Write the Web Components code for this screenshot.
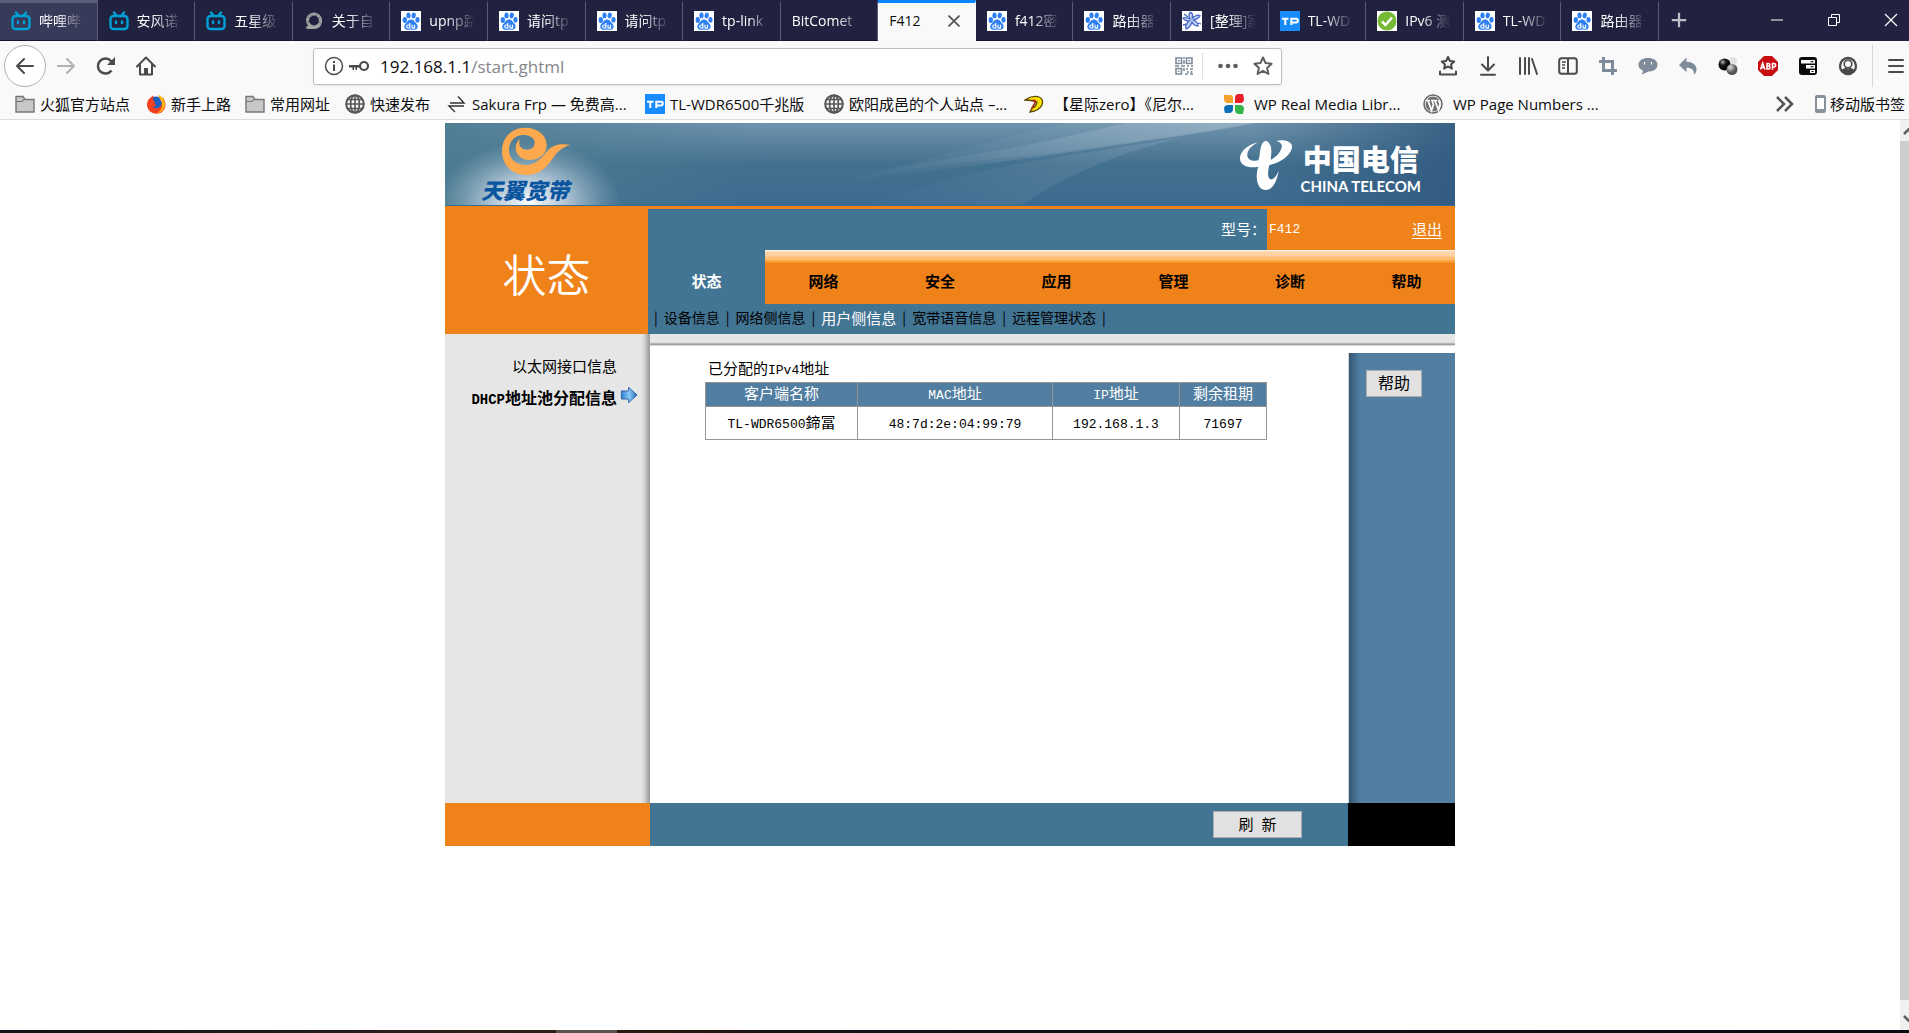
<!DOCTYPE html>
<html lang="zh-CN">
<head>
<meta charset="utf-8">
<title>F412</title>
<style>
html,body{margin:0;height:100%}
body{font-family:"Open Sans","Noto Sans CJK SC",sans-serif;font-size:15px;color:#000;background:#fff;overflow:hidden}
</style>
</head>
<body>
<browser-window></browser-window>
<script>
const component = (name, css, html) => customElements.define(name, class extends HTMLElement {
  constructor() {
    super();
    this.attachShadow({mode: 'open'}).innerHTML =
      `<style>*{box-sizing:border-box}button{font-family:inherit;cursor:pointer}a{color:inherit;text-decoration:none}${css}</style>${typeof html === 'function' ? html(this) : html}`;
  }
});

/* ---------- icons, drawn on a 20 x 20 grid ---------- */
const line = 'fill="none" stroke="currentColor" stroke-width="2" stroke-linecap="round" stroke-linejoin="round"';
const globe = `<g fill="none" stroke="#555" stroke-width="1.6"><circle cx="10" cy="10" r="8.8" stroke-width="2"/><ellipse cx="10" cy="10" rx="4.4" ry="8.8"/><path d="M10 1v18M1 10h18M2.8 5.5h14.4M2.8 14.500h14.400"/></g>`;
const icons = {
  bili: `<g fill="none" stroke="#00a1d6" stroke-width="2.400" stroke-linecap="round"><rect x="1.500" y="5" width="17" height="13" rx="3"/><path d="M5 1.500l2.500 3M15 1.500l-2.500 3M7 10.500v1.500M13 10.500v1.500"/></g>`,
  ring: `<path d="M10 1.500a8 8 0 0 1 8 8.500c0 5-3.500 8-8 8H3.500l-2-1.500L4 14.500A8 8 0 0 1 2 10a8 8 0 0 1 8-8.500z" fill="#a3a3a3"/><circle cx="10" cy="9.500" r="5" fill="#20223f"/><path d="M4 6l2 1M6 3.500l1.500 2M3 11l2-.5M13 3l-1 2M16 6.500l-2 1M16.500 12l-2-1" stroke="#66677a"/>`,
  baidu: `<path d="M0 0h20v20H0z" fill="#fff"/><g fill="#2f80f5"><ellipse cx="3.800" cy="9" rx="2.200" ry="2.900"/><ellipse cx="7.500" cy="4.400" rx="2.100" ry="2.900"/><ellipse cx="12.700" cy="4.500" rx="2.100" ry="2.900" transform="rotate(12 12.700 4.500)"/><ellipse cx="16.500" cy="8.800" rx="2.100" ry="2.800"/><path d="M10 8.500c2.800 0 3.500 2.300 5.300 4 2.300 2.300 1.500 6-1.500 6.300-1.400.1-2.400-.3-3.800-.3s-2.400.4-3.800.3C3 18.500 2.400 14.800 4.700 12.500c1.800-1.700 2.500-4 5.300-4z"/></g><path d="M8.800 12v5H7.200a1.500 1.500 0 0 1 0-3h1.600M11 13.800v2.400q0 .9 1 .9h1.500v-3.300" fill="none" stroke="#fff" stroke-width="1.200"/>`,
  sketch: `<path d="M0 0h20v20H0z" fill="#fff"/><path d="M8 1.500c3 0 3 3 2 6 3-3 6-4 8-3-1 3-4 4-7 4.500 3 1 5 3 5 6-3 0-5-2-6-4-1 3-3 6-6 7-1-3 1-6 3-8-3 0-5-1-6-3 2-1 5 0 7 1-1-2-1-5 0-6.500zM2 3l4 3M16 12l3 1M5 13l-4 1" fill="#c5d2f3" stroke="#4467c9" stroke-width="1.300"/>`,
  tp: `<path d="M0 0h20v20H0z" fill="#188cff"/><path d="M2 7.800h6.500M5.300 7.800V14M11.300 14V7.800h5q1.500 0 1.500 1.800t-1.500 1.800h-5" fill="none" stroke="#fff" stroke-width="2"/>`,
  check: `<path d="M0 0h20v20H0z" fill="#fff"/><circle cx="10" cy="10" r="9.500" fill="#76b935"/><path d="M5 10.500l3.500 3.500L15 6.500" fill="none" stroke="#fff" stroke-width="2.500"/>`,
  close: `<path d="M4.500 4.500l11 11m0-11l-11 11" ${line}/>`,
  plus: `<path d="M10 2v16M2 10h16" fill="none" stroke="currentColor" stroke-width="2.500"/>`,
  minimize: `<path d="M4 10h12" stroke="currentColor" stroke-width="1"/>`,
  restore: `<path d="M4.500 7.500h8v8h-8zM7.500 7V4.500h8v8H13" fill="none" stroke="currentColor"/>`,
  exit: `<path d="M4 4l12 12M16 4L4 16" stroke="currentColor" stroke-width="1.200"/>`,
  back: `<path d="M18 10H2M9 3l-7 7 7 7" ${line}/>`,
  forward: `<path d="M2 10h16M11 3l7 7-7 7" ${line}/>`,
  reload: `<path d="M15.500 14.500A7.500 7.500 0 1 1 15 5l1.500 2" fill="none" stroke="currentColor" stroke-width="2.500"/><path d="M19 1v8h-8z" fill="currentColor"/>`,
  home: `<path d="M1 10.500L10 1.500l9 9M4 9v9.500h12V9" ${line}/><path d="M8 12h4v6H8z" fill="currentColor"/>`,
  info: `<circle cx="10" cy="10" r="8.500" fill="none" stroke="currentColor" stroke-width="1.500"/><path d="M9 8.500h2V15H9zM9 5h2v2H9z" fill="currentColor"/>`,
  key: `<circle cx="15" cy="10" r="4" fill="none" stroke="currentColor" stroke-width="2.200"/><path d="M0 9h11v2.500H8V14H6.500v-2.500H5V14H3.500v-2.500H0z" fill="currentColor"/>`,
  qr: `<g fill="none" stroke="#7d8b9a" stroke-width="1.600"><path d="M2 2h5.500v5.500H2zM12.500 2H18v5.500h-5.500zM2 12.500h5.500V18H2z"/><path d="M4 4.700h1.500M14.500 4.700H16M4 15.200h1.500M9 2h2M10 4v4M1 10h4M7 10h4M13 10h2M17 10h2M10 12v3M12 13h2M16 13h3M13 16h2M11 18h3M16 18h3M17.500 15v2"/></g>`,
  dots: `<g fill="currentColor"><circle cx="2.500" cy="10" r="2.300"/><circle cx="10" cy="10" r="2.300"/><circle cx="17.500" cy="10" r="2.300"/></g>`,
  star: `<path d="M10 1.500l2.600 5.600 6 .7-4.500 4.100 1.300 6.100-5.400-3.100L4.600 18l1.300-6.100-4.500-4.100 6-.7z" ${line}/>`,
  tray: `<path d="M10 1l1.900 4 4.300.5-3.200 2.900.9 4.200-3.900-2.200-3.900 2.200.9-4.200-3.200-2.900 4.300-.5z" ${line}/><path d="M2 15.500V18.500h16v-3" ${line}/>`,
  download: `<path d="M10 1v13M4 8.500l6 6 6-6M3 18.800h14" ${line}/>`,
  library: `<path d="M2 2v16M7 2v16M11 2v16M14 3l5 15" ${line}/>`,
  sidebar: `<rect x="1.200" y="2.200" width="17.600" height="15.600" rx="2.500" ${line}/><path d="M10 2v16" stroke="currentColor" stroke-width="2"/><path d="M4 6h4M4 9h3M4 12h3" stroke="currentColor" stroke-width="1.500"/>`,
  crop: `<path d="M5.500 1v13.500H19M1 5.500h13.500V19" fill="none" stroke="#7d8b9a" stroke-width="3"/>`,
  chat: `<path d="M10 2c5.500 0 9.500 2.500 9.500 6.700s-4 6.800-9 6.800l-6.500 3 1-4C2 13.500.5 11.500.5 8.700.5 4.500 4.500 2 10 2z" fill="#7d8b9a"/><path d="M6.500 6v2.500M13.500 6v2.500" stroke="#fff" stroke-width="1.200"/>`,
  undo: `<path d="M8.500 1.500v4.300c6 0 10 3.200 10 7.700 0 2.300-1 3.900-2.700 5.300.8-4.500-2-7-7.300-7v4.500L1 9z" fill="#7d8b9a"/>`,
  balls: `<defs><radialGradient id="k" cx=".35" cy=".3"><stop stop-color="#bbb"/><stop offset=".5" stop-color="#222"/><stop offset="1"/></radialGradient><radialGradient id="g" cx=".35" cy=".3"><stop stop-color="#ddd"/><stop offset="1" stop-color="#555"/></radialGradient></defs><circle cx="15" cy="5" r="4" fill="#e2e2e2"/><circle cx="6.500" cy="8.500" r="6" fill="url(#k)"/><circle cx="14" cy="13.500" r="5.500" fill="url(#g)"/>`,
  abp: `<path d="M6 0h8l6 6v8l-6 6H6l-6-6V6z" fill="#c70d12"/><g fill="none" stroke="#fff" stroke-width="1.500"><path d="M2.500 13.500L4.700 7l2.200 6.500M3.200 11.500h3M9 7.500V13h1.500q1.500 0 1.500-1.500T10.500 10H9h1.300q1.500 0 1.500-1.300T10.300 7.500zM14.500 13.800V7.500h1.300q1.800 0 1.800 1.700t-1.800 1.700h-1.300"/></g>`,
  notes: `<path d="M4 1h12q3 0 3 3v12q0 3-3 3H4q-3 0-3-3V4q0-3 3-3z" fill="#0c0c0c"/><path d="M3 4h14v3.500H3zM8 9h9v3.500H8zM12 14h5v3h-5z" fill="#fff"/><path d="M12.500 5.700h3M12.500 10.700h3M13.500 15.500h2" stroke="#000"/>`,
  account: `<circle cx="10" cy="10" r="8" fill="none" stroke="currentColor" stroke-width="2.300"/><circle cx="10" cy="8" r="3.800" fill="none" stroke="currentColor" stroke-width="1.600"/><path d="M3.500 14q2.500-2 4-2.200 2.500 1.500 5 0 1.500.2 4 2.200-2.500 4-6.500 4t-6.500-4z" fill="currentColor"/>`,
  menu: `<path d="M3 4h14M3 10h14M3 16h14" ${line}/>`,
  folder: `<path d="M1 2.500h7l2 3h9V18H1z" fill="#c8c8ca" stroke="#77777a" stroke-width="1.400"/><path d="M1 7.500h6l2-2" fill="none" stroke="#77777a" stroke-width="1.200"/>`,
  firefox: `<circle cx="10" cy="10.500" r="8" fill="#1b5fc4"/><path d="M8 1.500C2 4 .5 8 1.200 12.500 2.200 17 6 19.700 10.500 19.700c5.500 0 9-4 9-9.200 0-3-1.500-5.500-3-7.500.5 3-.5 7-2 9-2 3-6.500 3-8 .5 2 .5 3-.5 4-1.500-2-.5-2.500-2.500-1.500-4C7 7 6 6 8 1.500z" fill="#f6401d"/><path d="M12.500.5c4.500 3 7 6.500 6.500 11-.5 4-3.500 7-8 7.500 4-2 5.500-5 5-9-.3-3-3-5-3.500-9.500z" fill="#ffb515"/>`,
  globe,
  natapp: `<path d="M3 9h14L11 2.500M17 12H2l6 6" fill="none" stroke="#333" stroke-width="1.400"/>`,
  swoop: `<path d="M1 6q7-5 14-3 5 2 3 8-3 6-12 7l2-4q4-1 5-6-6-2-12-2z" fill="#ffe400" stroke="#5a4500" stroke-width="1.300"/><path d="M8 6.500q4-1 3.500 1.500l-4 7" fill="none" stroke="#b22c10" stroke-width="1.600"/>`,
  clover: `<path d="M0 1h6q3 0 3 3v5H4Q0 9 0 5z" fill="#f6a22c"/><path d="M19 0h-4q-4 0-4 4v5h5q4 0 4-4z" fill="#e91d25"/><path d="M1 19h4q4 0 4-4v-4H4q-4 0-4 4z" fill="#0d6fb8"/><path d="M19 20h-4q-4 0-4-4v-5h5q4 0 4 4z" fill="#35b44a"/>`,
  wordpress: `<circle cx="10" cy="10" r="9" fill="#fff" stroke="#666" stroke-width="1.500"/><circle cx="10" cy="10" r="7.500" fill="#707070"/><path d="M2.500 6.500H7M5 6.500l3.500 10 2-6L9 6.500h5M12 6.500l3.500 9.500 1.500-6-1.500-4" fill="none" stroke="#fff" stroke-width="1.700"/>`,
  more: `<path d="M3 3l7 7-7 7M11 3l7 7-7 7" fill="none" stroke="#555" stroke-width="2.500"/>`,
  phone: `<rect x="5" y="1" width="11" height="18" rx="2" fill="#87919c"/><path d="M7 4h7v11H7z" fill="#fff"/>`,
  arrow: `<defs><linearGradient id="a" x2="1"><stop stop-color="#2f7fd0"/><stop offset=".5" stop-color="#8cc8f5"/><stop offset="1" stop-color="#2468b8"/></linearGradient></defs><path d="M1.500 5.500h8V1.500l9.500 8.500-9.500 8.500v-4h-8z" fill="url(#a)" stroke="#2a5da8"/>`
};
component('ui-icon', `:host{display:block;width:20px;height:20px;flex:none}svg{display:block;width:100%;height:100%}`,
  el => `<svg viewBox="0 0 20 20" aria-hidden="true">${icons[el.getAttribute('name')]}</svg>`);

/* ---------- browser chrome ---------- */
component('browser-tab', `
:host{display:flex;align-items:center;gap:8px;min-width:0;padding:0 12px 1px 11px;border-right:1px solid #5b5c78;border-top:3px solid transparent;border-bottom:1px solid #14162f;color:#fff;font-size:14px;overflow:hidden}
.label{flex:1;min-width:0;overflow:hidden;white-space:nowrap;line-height:20px;padding-bottom:1px;-webkit-mask-image:linear-gradient(90deg,#000 35%,transparent);mask-image:linear-gradient(90deg,#000 35%,transparent)}
:host([wide]) .label{-webkit-mask-image:linear-gradient(90deg,#000 60%,transparent);mask-image:linear-gradient(90deg,#000 60%,transparent)}
:host([hover]){background:#383a59;border-top-color:#5c5d78}
:host([active]){background:#f9f9fa;color:#0c0c0d;border-top-color:#0a84ff;border-right-color:#f9f9fa;border-bottom-color:#f9f9fa}
:host([active]) .label{-webkit-mask-image:none;mask-image:none}
button{display:flex;padding:0;border:0;background:none;color:#555}
ui-icon[name=close]{width:18px;height:18px}`,
  el => `${el.hasAttribute('icon') ? `<ui-icon name="${el.getAttribute('icon')}"></ui-icon>` : ''}<span class="label"><slot></slot></span>${el.hasAttribute('active') ? '<button aria-label="关闭标签页"><ui-icon name="close"></ui-icon></button>' : ''}`);

component('tab-strip', `
:host{display:flex;height:41px;background:#20223f;color:#fff}
.tabs{flex:1;min-width:0;display:grid;grid-template-columns:repeat(17,minmax(0,1fr))}
.controls{width:250px;display:flex;justify-content:space-between;align-items:center;padding:0 8px 1px 11px}
.window{display:flex;gap:37px}
button{display:flex;padding:0;border:0;background:none;color:#fff}
.new{color:#bdbdc8}.new ui-icon{width:18px;height:18px}`, `
<div class="tabs">
<browser-tab hover icon="bili">哔哩哔</browser-tab><browser-tab icon="bili">安风诺</browser-tab><browser-tab icon="bili">五星级</browser-tab><browser-tab icon="ring">关于自</browser-tab><browser-tab icon="baidu">upnp路</browser-tab><browser-tab icon="baidu">请问tp</browser-tab><browser-tab icon="baidu">请问tp</browser-tab><browser-tab icon="baidu" wide>tp-link</browser-tab><browser-tab wide>BitComet</browser-tab><browser-tab active>F412</browser-tab><browser-tab icon="baidu">f412密</browser-tab><browser-tab icon="baidu">路由器</browser-tab><browser-tab icon="sketch">[整理]家</browser-tab><browser-tab icon="tp">TL-WD</browser-tab><browser-tab icon="check">IPv6 测</browser-tab><browser-tab icon="baidu">TL-WD</browser-tab><browser-tab icon="baidu">路由器</browser-tab>
</div>
<div class="controls"><button class="new" aria-label="新建标签页"><ui-icon name="plus"></ui-icon></button>
<div class="window"><button aria-label="最小化"><ui-icon name="minimize"></ui-icon></button><button aria-label="还原"><ui-icon name="restore"></ui-icon></button><button aria-label="关闭"><ui-icon name="exit"></ui-icon></button></div></div>`);

component('nav-toolbar', `
:host{display:flex;align-items:center;height:50px;padding:0 3px 0 4px;color:#4a4a4c}
button{display:flex;padding:0;border:0;background:none;color:inherit}
.history{display:flex;align-items:center;width:309px;gap:20px}
.back{width:42px;height:42px;border:1px solid #b1b1b3;border-radius:50%;background:#fff;align-items:center;justify-content:center}
.off{color:#b1b1b3;margin-left:-10px}
.address{flex:1;display:flex;align-items:center;height:37px;padding:0 8px 0 10px;background:#fff;border:1px solid #bebec0;border-radius:3px;box-shadow:0 1px 3px #0001}
.address>ui-icon{margin-right:5px}
.field{flex:1;display:grid;align-items:center;font-size:17px;color:#0c0c0d;padding-left:6px}
.field>*{grid-area:1/1}
.path{color:#85858a}
.field input{width:100%;padding:0;border:0;outline:0;background:none;font:inherit;color:transparent}
.actions{display:flex;align-items:center;gap:15px;color:#5d5d60}
.actions i{width:1px;height:26px;margin-left:-7px;background:#e0e0e2}
.tools{display:flex;gap:20px;padding:0 14px 0 156px}
.menu{height:42px;border-left:1px solid #d7d7db;padding-left:13px;align-items:center}`, `
<div class="history"><button class="back" aria-label="后退"><ui-icon name="back"></ui-icon></button><button class="off" aria-label="前进"><ui-icon name="forward"></ui-icon></button><button aria-label="刷新"><ui-icon name="reload"></ui-icon></button><button aria-label="主页"><ui-icon name="home"></ui-icon></button></div>
<div class="address"><ui-icon name="info"></ui-icon><ui-icon name="key"></ui-icon>
<div class="field"><span>192.168.1.1<span class="path">/start.ghtml</span></span><input type="text" aria-label="地址"></div>
<div class="actions"><ui-icon name="qr"></ui-icon><i></i><ui-icon name="dots"></ui-icon><ui-icon name="star"></ui-icon></div></div>
<div class="tools">${['tray','download','library','sidebar','crop','chat','undo','balls','abp','notes','account'].map(n => `<button aria-label="${n}"><ui-icon name="${n}"></ui-icon></button>`).join('')}</div>
<button class="menu" aria-label="菜单"><ui-icon name="menu"></ui-icon></button>`);

component('bookmark-item', `:host{display:flex;min-width:0}a{display:flex;align-items:center;gap:5px;white-space:nowrap;line-height:20px;color:#0c0c0d}:host([spaced]) a{gap:10px}:host([tight]) a{gap:0}`,
  el => `<a href="#"><ui-icon name="${el.getAttribute('icon')}"></ui-icon><span><slot></slot></span></a>`);

component('bookmark-bar', `
:host{display:flex;align-items:center;height:28px;padding:0 4px 3px 15px}
nav{flex:1;display:grid;grid-template-columns:131px 99px 100px 102px 198px 179px 200px 200px 199px 1fr}
.end{display:flex;align-items:center;gap:16px}
button{display:flex;padding:0;border:0;background:none}`, `
<nav aria-label="书签"><bookmark-item icon="folder">火狐官方站点</bookmark-item><bookmark-item icon="firefox">新手上路</bookmark-item><bookmark-item icon="folder">常用网址</bookmark-item><bookmark-item icon="globe">快速发布</bookmark-item><bookmark-item icon="natapp">Sakura Frp — 免费高...</bookmark-item><bookmark-item icon="tp">TL-WDR6500千兆版</bookmark-item><bookmark-item icon="globe">欧阳成邑的个人站点 –...</bookmark-item><bookmark-item icon="swoop" spaced>【星际zero】《尼尔...</bookmark-item><bookmark-item icon="clover" spaced>WP Real Media Libr...</bookmark-item><bookmark-item icon="wordpress" spaced>WP Page Numbers ...</bookmark-item></nav>
<div class="end"><button aria-label="更多书签"><ui-icon name="more"></ui-icon></button><bookmark-item icon="phone" tight>移动版书签</bookmark-item></div>`);

component('scroll-track', `
:host{display:flex;flex-direction:column;width:9px;background:#f0f0f0;overflow:hidden}
div{flex:1;background:#cdcdcd}
svg{display:block;width:17px;flex:none}`, `
<svg height="21" viewBox="0 0 17 21"><path d="M4 14l4.500-4.500L13 14" fill="none" stroke="#606060" stroke-width="2.500"/></svg><div></div>
<svg height="30" viewBox="0 0 17 30"><path d="M4 16l4.500 4.500L13 16" fill="none" stroke="#606060" stroke-width="2.500"/></svg>`);

/* ---------- router page ---------- */
component('brand-banner', `
:host{display:grid;height:83px;overflow:hidden;border-bottom:1px solid #3a6b90}
:host>*,svg,.words{grid-area:1/1}
svg{display:block;width:100%;height:83px}
.words{display:flex;justify-content:space-between;align-items:flex-start;padding:18px 34px 0 36px}
.left{font-size:22px;line-height:28px;font-weight:900;font-style:italic;color:#0a55a0;padding-top:35px}
.right{text-align:center;color:#fff}
.right b{display:block;font-size:29px;line-height:38px;font-weight:900}
.right small{display:block;font:bold 15px/15px Lato,sans-serif}`, `
<svg viewBox="0 0 1010 83" preserveAspectRatio="none" aria-hidden="true"><defs>
<linearGradient id="base" x2="0" y2="1"><stop stop-color="#6f93ad"/><stop offset=".5" stop-color="#42708f"/><stop offset="1" stop-color="#3d6b90"/></linearGradient>
<linearGradient id="side"><stop stop-color="#4d7d92" stop-opacity=".9"/><stop offset=".3" stop-color="#4d7d92" stop-opacity="0"/><stop offset=".8" stop-color="#30597f" stop-opacity="0"/><stop offset="1" stop-color="#30597f" stop-opacity=".85"/></linearGradient>
<radialGradient id="glow"><stop stop-color="#fff"/><stop offset=".4" stop-color="#d5e0ec" stop-opacity=".75"/><stop offset="1" stop-color="#a0bdd0" stop-opacity="0"/></radialGradient>
<linearGradient id="ray"><stop stop-color="#b8cbd9" stop-opacity="0"/><stop offset="1" stop-color="#b8cbd9" stop-opacity=".5"/></linearGradient></defs>
<path d="M0 0h1010v83H0z" fill="url(#base)"/><path d="M0 0h1010v83H0z" fill="url(#side)"/>
<path d="M315 83Q430 45 590 32Q700 18 810 0H620Q460 40 315 83z" fill="url(#ray)" opacity=".35"/><path d="M420 56Q600 34 700 18Q760 10 810 0H680Q560 30 420 48z" fill="url(#ray)" opacity=".8"/>
<path d="M420 83Q500 52 590 38Q660 26 735 15Q640 38 575 83z" fill="url(#ray)" opacity=".35"/>
<ellipse cx="84" cy="80" rx="92" ry="62" fill="url(#glow)"/>
<path transform="translate(-5 -8) scale(.33333)" fill="#ffa94e" d="M240 72C232 95 248 105 262 104C276 103 285 94 284 82C283 68 268 60 250 60C222 60 206 82 207 108C208 134 230 150 256 150C292 150 305 125 325 105C345 84 370 86 392 90C360 98 352 112 335 135C315 162 295 180 258 180C215 180 186 148 186 108C186 68 215 38 255 38C295 38 320 62 320 90C320 118 298 135 268 135C243 135 227 118 227 100C227 88 232 78 240 72Z"/>
<path transform="translate(505 -8) scale(.33333)" fill="#fff" d="M925 82C895 88 868 110 870 132C872 155 900 160 925 155C918 175 918 200 928 215C936 226 952 228 962 220C975 210 982 190 986 168C978 185 970 195 962 193C952 190 953 170 958 150C985 145 1020 125 1026 98C1028 80 1005 72 978 78C990 80 998 88 995 98C990 115 975 128 962 134C964 115 968 95 955 82C948 74 938 80 934 92C928 110 930 125 925 136C905 140 890 132 892 118C894 102 908 90 925 82Z"/></svg>
<div class="words"><div class="left">天翼宽带</div><div class="right"><b>中国电信</b><small>CHINA TELECOM</small></div></div>`);

component('device-bar', `
:host{display:flex;height:44px;color:#fff;line-height:41px}
.model{flex:1;background:#427493;border-top:3px solid #ef8219;text-align:right;padding-right:1px}
.value{width:188px;background:#ef8219;display:flex;justify-content:space-between;padding:3px 13px 0 2px}
.value span{font:13px/41px "Liberation Mono",monospace}
a{text-decoration:underline;text-underline-offset:3px}`, `
<div class="model">型号：</div><div class="value"><span>F412</span><a href="#">退出</a></div>`);

component('main-menu', `
:host{display:grid;grid-template-columns:repeat(2,117px 117px 116px) 1fr;overflow:hidden;height:54px}
a{display:flex;align-items:center;justify-content:center;padding-top:6px;font-weight:bold;color:#000;background:linear-gradient(#fdeee0 0 1px,#fdd0a5 2px 6px,#ffbd72 7px 10px,#fba842 10px 12px,#f4902a 12px 13px,#ef8219 13px)}
a:last-child{padding-left:10px}
a[aria-current]{background:#427493;color:#fff}`, `
<a href="#" aria-current="page">状态</a><a href="#">网络</a><a href="#">安全</a><a href="#">应用</a><a href="#">管理</a><a href="#">诊断</a><a href="#">帮助</a>`);

component('sub-menu', `
:host{display:flex;align-items:center;gap:6px;height:30px;padding:0 6px 4px;background:#427493;font-family:"Noto Sans CJK SC",sans-serif;font-size:14px;white-space:nowrap}
a[aria-current]{color:#fff;font-size:15px}`, `
<span>|</span><a href="#">设备信息</a><span>|</span><a href="#">网络侧信息</a><span>|</span><a href="#" aria-current="page">用户侧信息</a><span>|</span><a href="#">宽带语音信息</a><span>|</span><a href="#">远程管理状态</a><span>|</span>`);

component('page-header', `
:host{display:grid;grid-template-columns:203px minmax(0,1fr)}
h1{margin:0;display:flex;align-items:center;justify-content:center;padding-top:10px;background:#ef8219;color:#fff;font-size:44px;font-weight:350;line-height:48px}`, `
<h1>状态</h1><div><device-bar></device-bar><main-menu></main-menu><sub-menu></sub-menu></div>`);

component('side-menu', `
:host{display:block;width:205px;background:linear-gradient(270deg,#9b9b9b,#a8a8a8 2px,#cfcfcf 5px,#e6e6e6 9px)}
ul{list-style:none;margin:0;padding:16px 12px 0 0}
li{display:grid;grid-template-columns:1fr 18px;column-gap:3px;align-items:center;height:31px;text-align:right;white-space:nowrap}
li b{font-size:16px}
.en{font:bold 14px "Liberation Mono",monospace}
ui-icon{width:18px;height:18px;margin-bottom:4px}`, `
<ul><li><a href="#">以太网接口信息</a></li><li><a href="#"><b><span class="en">DHCP</span>地址池分配信息</b></a><ui-icon name="arrow"></ui-icon></li></ul>`);

component('lease-table', `
:host{display:block;padding:10px 0 0 55px}
.en{font:13px "Liberation Mono",monospace}
table{width:562px;border-collapse:collapse;table-layout:fixed;line-height:20px}
caption{text-align:left;padding:1px 3px 3px;line-height:22px}
th,td{border:1px solid #959595;padding:0 0 3px;text-align:center;font-weight:normal}
th{height:24px;background:#517ea1;color:#fff}
td{height:33px}`, `
<table><caption>已分配的<span class="en">IPv4</span>地址</caption>
<colgroup><col style="width:152px"><col style="width:195px"><col style="width:127px"><col></colgroup>
<tr><th>客户端名称</th><th><span class="en">MAC</span>地址</th><th><span class="en">IP</span>地址</th><th>剩余租期</th></tr>
<tr><td><span class="en">TL-WDR6500</span>鍗冨</td><td><span class="en">48:7d:2e:04:99:79</span></td><td><span class="en">192.168.1.3</span></td><td><span class="en">71697</span></td></tr></table>`);

const control = `button{height:27px;padding:0 0 2px;border:1px solid #adadad;background:#e1e1e1;color:#000;line-height:20px;white-space:pre}`;
component('help-panel', `${control}
:host{display:block;width:107px;margin-top:7px;padding:17px 0 0 18px;background:linear-gradient(90deg,#c9d2da 1px,#35566f 1px,#426a89 6px,#517ea1 12px)}
button{width:56px;font-size:16px}`, `<button>帮助</button>`);

component('page-footer', `${control}
:host{display:grid;grid-template-columns:205px 1fr 107px;height:43px}
.a{background:#ef8219}.b{background:#427493;text-align:right;padding:8px 46px 0 0}.c{background:#000}
button{width:89px;font-size:15px}`, `<div class="a"></div><div class="b"><button>刷  新</button></div><div class="c"></div>`);

component('router-page', `
:host{display:block;width:1010px;margin:3px auto 0}
.body{display:flex;min-height:469px}
.main{flex:1;display:flex;flex-direction:column}
.edge{height:12px;background:linear-gradient(#e6e6e6 0 8px,#cfcfcf 9px,#a2a2a2 10px,#a2a2a2 11px,#d8d8d8 11px)}
.row{flex:1;display:flex}
lease-table{flex:1}`, `
<brand-banner></brand-banner><page-header></page-header>
<div class="body"><side-menu></side-menu><div class="main"><div class="edge"></div><div class="row"><lease-table></lease-table><help-panel></help-panel></div></div></div>
<page-footer></page-footer>`);

component('browser-window', `
:host{display:flex;flex-direction:column;height:100vh}
header{background:#f9f9fa;border-bottom:1px solid #dcdcde}
main{flex:1;min-height:0;display:flex}
.view{flex:1;overflow:hidden}
footer{height:3px;background:linear-gradient(90deg,transparent 556px,#5a524c 556px 617px,transparent 617px),linear-gradient(90deg,#0c1218,#2e211b 25%,#2a180f 35%,#0c1218 45%,#0a0e14)}`, `
<header><tab-strip></tab-strip><nav-toolbar></nav-toolbar><bookmark-bar></bookmark-bar></header>
<main><div class="view"><router-page></router-page></div><scroll-track></scroll-track></main><footer></footer>`);
</script>
</body>
</html>
